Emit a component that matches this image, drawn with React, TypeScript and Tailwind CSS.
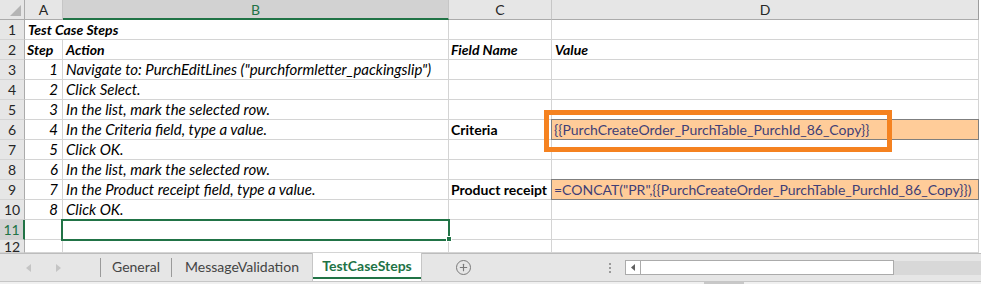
import { Plus } from 'lucide-react';

type Row = {
  n: number;
  a?: string;
  b?: string;
  c?: string;
  d?: string;
  title?: boolean;
  head?: boolean;
  input?: boolean;
};

const rows: Row[] = [
  { n: 1, a: 'Test Case Steps', title: true },
  { n: 2, a: 'Step', b: 'Action', c: 'Field Name', d: 'Value', head: true },
  { n: 3, a: '1', b: 'Navigate to: PurchEditLines ("purchformletter_packingslip")' },
  { n: 4, a: '2', b: 'Click Select.' },
  { n: 5, a: '3', b: 'In the list, mark the selected row.' },
  { n: 6, a: '4', b: 'In the Criteria field, type a value.', c: 'Criteria', d: '{{PurchCreateOrder_PurchTable_PurchId_86_Copy}}', input: true },
  { n: 7, a: '5', b: 'Click OK.' },
  { n: 8, a: '6', b: 'In the list, mark the selected row.' },
  { n: 9, a: '7', b: 'In the Product receipt field, type a value.', c: 'Product receipt', d: '=CONCAT("PR",{{PurchCreateOrder_PurchTable_PurchId_86_Copy}})', input: true },
  { n: 10, a: '8', b: 'Click OK.' },
  { n: 11 },
  { n: 12 },
];

const grid = 'border-r border-b border-[#d4d4d4]';

function ColHeader({ label, w, active }: { label: string; w: string; active?: boolean }) {
  return (
    <div
      className={`${w} h-full flex items-center justify-center border-r border-[#c6c6c6] ${
        active ? 'bg-[#d2d2d2] border-b-2 border-b-[#217346] text-[#217346]' : 'border-b border-b-[#ababab] text-[#262626]'
      }`}
    >
      {label}
    </div>
  );
}

function SheetRow({ row }: { row: Row }) {
  const selected = row.n === 11;
  const italic = row.head || row.title ? 'font-bold italic' : 'italic';
  return (
    <div className={`flex ${row.n === 12 ? 'h-[13px]' : 'h-[20px]'}`}>
      <div
        className={`w-[25px] shrink-0 flex items-center justify-center border-b border-[#d4d4d4] ${
          selected ? 'bg-[#d2d2d2] border-r-2 border-r-[#217346] text-[#217346]' : 'bg-[#e6e6e6] border-r border-r-[#ababab] text-[#262626]'
        }`}
      >
        {row.n}
      </div>
      <div
        className={`w-[38px] shrink-0 flex items-center whitespace-nowrap border-b border-[#d4d4d4] ${
          row.title ? 'pl-[3px]' : 'border-r justify-end pr-[4px]'
        } ${row.head ? 'justify-start pl-[2px]' : ''} ${italic} ${row.head || row.title ? '' : 'text-[15px]'}`}
      >
        {row.a}
      </div>
      <div
        className={`w-[386px] shrink-0 flex items-center pl-[3px] whitespace-nowrap ${grid} ${italic} ${
          row.head ? '' : 'text-[15px]'
        }`}
      >
        {row.b}
      </div>
      <div className={`w-[103px] shrink-0 flex items-center pl-[2px] whitespace-nowrap font-bold ${row.head ? 'italic' : ''} ${grid}`}>
        {row.c}
      </div>
      <div className={`w-[427px] shrink-0 relative flex items-center pl-[3px] whitespace-nowrap ${grid} ${row.head ? 'font-bold italic' : ''}`}>
        {row.input ? (
          <div className="absolute -left-px -top-px -right-px -bottom-px border border-[#7f7f7f] bg-[#ffcc99] text-[#3f3f76] flex items-center pl-[2px]">
            {row.d}
          </div>
        ) : (
          row.d
        )}
      </div>
      <div className="flex-1" />
    </div>
  );
}

export default function App() {
  return (
    <div className="w-[981px] h-[284px] overflow-hidden bg-white font-['Lato',sans-serif] text-[14px] text-black select-none">
      {/* Grid */}
      <div className="relative h-[253px] overflow-hidden">
        <div className="flex h-[20px] bg-[#e6e6e6]">
          <div className="w-[25px] h-full relative border-r border-b border-[#ababab]">
            <svg className="absolute left-0 top-0" width="24" height="19" viewBox="0 0 24 19">
              <polygon points="21,5 21,16 10,16" fill="#b4b4b4" />
            </svg>
          </div>
          <ColHeader label="A" w="w-[38px]" />
          <ColHeader label="B" w="w-[386px]" active />
          <ColHeader label="C" w="w-[103px]" />
          <div className="w-[427px] h-full flex items-center justify-center border-r border-r-[#9c9c9c] border-b border-b-[#ababab] text-[#262626]">
            D
          </div>
          <div className="flex-1 bg-white" />
        </div>

        {rows.map((r) => (
          <SheetRow key={r.n} row={r} />
        ))}

        {/* active cell B11 */}
        <div className="absolute left-[61px] top-[219px] w-[389px] h-[22px] border-2 border-[#217346]" />
        <div className="absolute left-[446px] top-[236px] w-[6px] h-[6px] bg-[#217346] border border-white" />

        {/* annotation box */}
        <div className="absolute left-[544px] top-[110px] w-[348px] h-[42px] border-[5px] border-[#f58220]" />
      </div>

      {/* Sheet tabs */}
      <div className="h-[28px] flex items-stretch bg-[#e6e6e6] border-t border-[#bcbcbc] text-[#444]">
        <div className="w-[100px] flex items-center">
          <svg className="ml-[26px]" width="5" height="8" viewBox="0 0 5 8">
            <polygon points="5,0 5,8 0,4" fill="#c4c4c4" />
          </svg>
          <svg className="ml-[25px]" width="5" height="8" viewBox="0 0 5 8">
            <polygon points="0,0 0,8 5,4" fill="#c4c4c4" />
          </svg>
        </div>
        <div className="flex items-center">
          <div className="w-px h-[19px] bg-[#9a9a9a]" />
        </div>
        <div className="w-[70px] flex items-center justify-center pb-[2px]">General</div>
        <div className="flex items-center">
          <div className="w-px h-[19px] bg-[#9a9a9a]" />
        </div>
        <div className="w-[140px] flex items-center justify-center pb-[2px]">MessageValidation</div>
        <div className="w-[110px] -mt-px bg-white border-x border-[#c6c6c6] flex flex-col">
          <div className="flex-1 flex items-center justify-center font-bold text-[#217346]">TestCaseSteps</div>
          <div className="h-[2px] bg-[#217346] mb-[2px]" />
        </div>
        <div className="w-[83px] flex items-center justify-center">
          <Plus className="w-[15px] h-[15px] text-[#7a7a7a] rounded-full border-[1.5px] border-[#7a7a7a] p-[1px]" strokeWidth={2.5} />
        </div>
        <div className="flex-1 flex items-center justify-end pr-[14px]">
          <div className="flex flex-col gap-[2px]">
            <div className="w-[2px] h-[2px] bg-[#9a9a9a]" />
            <div className="w-[2px] h-[2px] bg-[#9a9a9a]" />
            <div className="w-[2px] h-[2px] bg-[#9a9a9a]" />
          </div>
        </div>
        <div className="flex items-center">
          <div className="w-[269px] h-[15px] bg-white border border-[#ababab] flex">
            <div className="w-[15px] border-r border-[#ababab] flex items-center justify-center">
              <svg width="4" height="7" viewBox="0 0 4 7">
                <polygon points="4,0 4,7 0,3.5" fill="#606060" />
              </svg>
            </div>
          </div>
          <div className="w-[87px] h-[14px] bg-[#d8d8d8]" />
        </div>
      </div>
      <div className="h-[3px] bg-[#f0f0f0] border-t border-[#c6c6c6] relative">
        <div className="absolute left-[704px] top-0 w-[40px] h-[2px] bg-[#c8c8c8]" />
      </div>
    </div>
  );
}
